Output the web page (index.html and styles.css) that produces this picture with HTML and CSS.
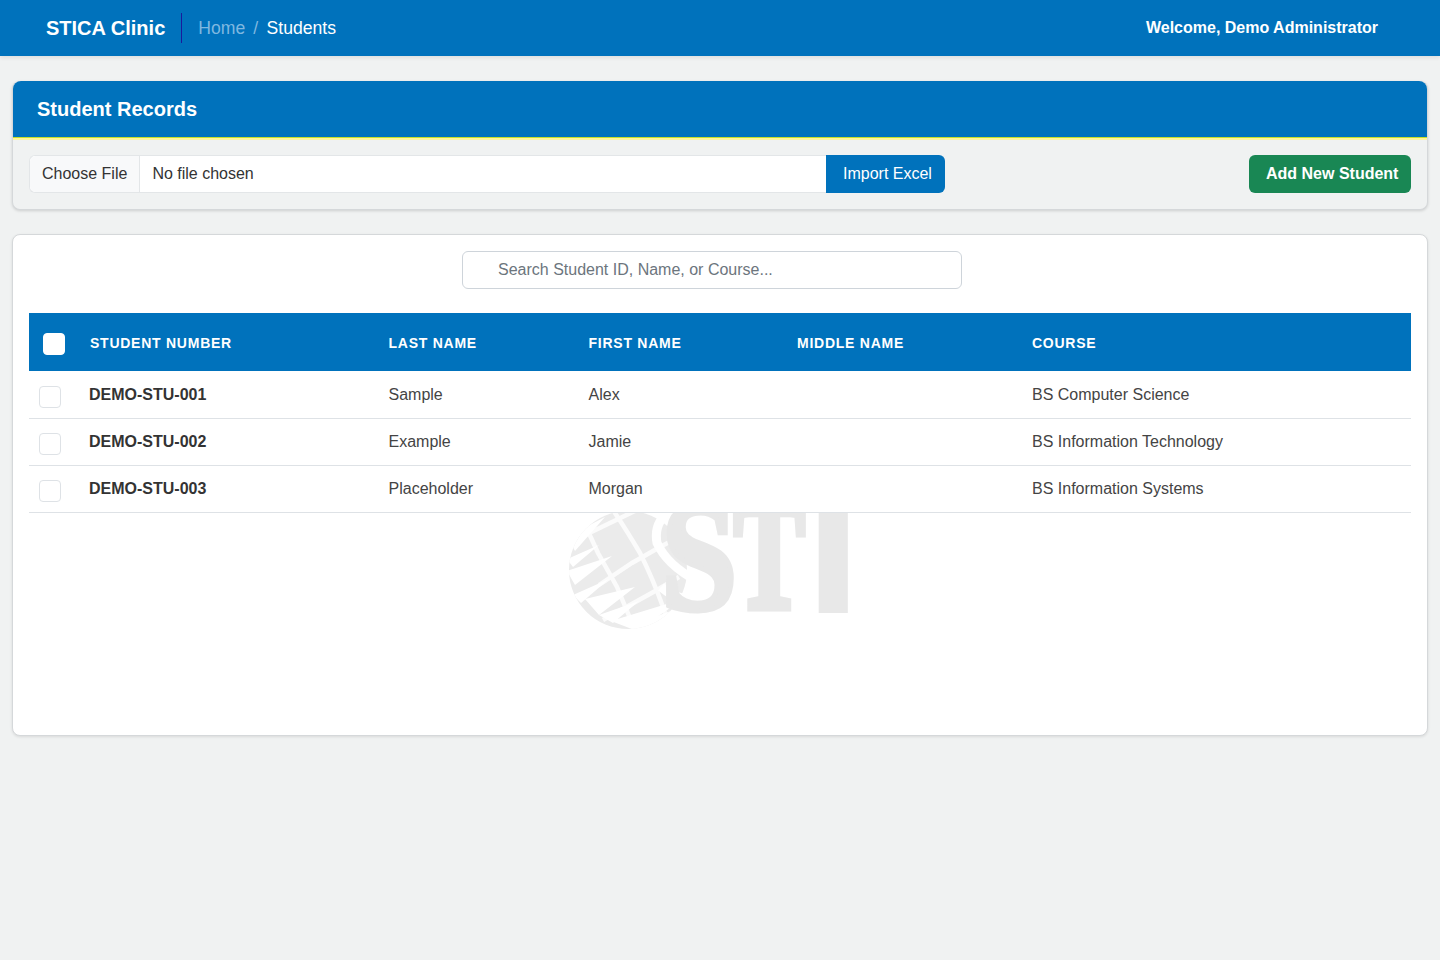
FILE: index.html
```html
<!DOCTYPE html>
<html lang="en">
  <head>
    <meta charset="UTF-8" />
    <meta name="viewport" content="width=device-width, initial-scale=1.0" />
    <title>Student Records</title>
    <link rel="stylesheet" href="styles.css">
  </head>
  <body>
    <nav class="navbar">
      <a class="brand" href="#">STICA Clinic</a>
      <div class="breadcrumb">
        <a href="#">Home</a>
        <span class="sep">/</span>
        <span class="current">Students</span>
      </div>
      <div class="welcome">Welcome, Demo Administrator</div>
    </nav>

    <main class="content">
      <section class="records-card">
        <div class="records-header">
          <h1>Student Records</h1>
        </div>
        <div class="records-tools">
          <form class="import-form">
            <label class="file-field">
              <span class="file-btn">Choose File</span>
              <span class="file-name">No file chosen</span>
            </label>
            <button type="button" class="import-btn">Import Excel</button>
          </form>
          <button type="button" class="add-btn">Add New Student</button>
        </div>
      </section>

      <section class="table-card">
        <!-- Watermark sits behind the table, rows hide the top of it -->
        <svg class="watermark" width="300" height="140" viewBox="0 0 300 140" aria-hidden="true">
          <defs>
            <clipPath id="globeClip">
              <circle cx="59" cy="69" r="59" />
            </clipPath>
          </defs>
          <g clip-path="url(#globeClip)">
            <rect x="0" y="0" width="130" height="130" fill="#ebebeb" />
            <g class="globe-lines">
              <path d="M36 -5 L46 12 Q58 30 71 52 Q84 78 94 106 L102 130" />
              <path d="M18 28 L29 52 L48 86 L63 122 L68 136" />
              <path d="M30 84 L63 62 L91 46 L110 36" />
              <path d="M34 119 L88 89 L110 76" />
              <path d="M12 36 L70 8 L90 2" />
            </g>
            <g fill="#fff">
              <polygon points="-2,36 36,16 6,50" />
              <polygon points="-2,58 30,44 4,66" />
              <polygon points="-2,70 43,55 6,84" />
              <polygon points="4,94 40,78 12,102" />
              <polygon points="16,98 66,86 30,114" />
              <polygon points="30,114 70,100 44,122" />
              <polygon points="42,120 114,98 68,130" />
              <polygon points="64,124 118,104 90,130" />
            </g>
          </g>
          <!-- white edge of the S over the globe -->
          <path class="s-edge" d="M104 8 Q84 20 88 42 Q98 64 128 80 Q142 92 128 98 Q108 100 92 86" />
          <text class="wm-letter wm-s" transform="translate(92 108) scale(0.88 1)">S</text>
          <text class="wm-letter wm-t" transform="translate(165 107) scale(0.68 1)">T</text>
          <text class="wm-letter wm-i" transform="translate(244 108)">I</text>
        </svg>

        <div class="search-row">
          <input class="search-input" type="text" placeholder="Search Student ID, Name, or Course..." />
        </div>

        <table id="studentTable">
          <colgroup>
            <col class="col-check" />
            <col class="col-number" />
            <col class="col-last" />
            <col class="col-first" />
            <col class="col-middle" />
            <col />
          </colgroup>
          <thead>
            <tr>
              <th><span class="check check-head"></span></th>
              <th>Student Number</th>
              <th>Last Name</th>
              <th>First Name</th>
              <th>Middle Name</th>
              <th>Course</th>
            </tr>
          </thead>
          <tbody>
            <tr>
              <td><span class="check"></span></td>
              <td class="student-no">DEMO-STU-001</td>
              <td>Sample</td>
              <td>Alex</td>
              <td></td>
              <td>BS Computer Science</td>
            </tr>
            <tr>
              <td><span class="check"></span></td>
              <td class="student-no">DEMO-STU-002</td>
              <td>Example</td>
              <td>Jamie</td>
              <td></td>
              <td>BS Information Technology</td>
            </tr>
            <tr>
              <td><span class="check"></span></td>
              <td class="student-no">DEMO-STU-003</td>
              <td>Placeholder</td>
              <td>Morgan</td>
              <td></td>
              <td>BS Information Systems</td>
            </tr>
          </tbody>
        </table>
      </section>
    </main>
  </body>
</html>
```

FILE: styles.css
```css
/* General styling */
* {
  box-sizing: border-box;
}

body {
  font-family: "Liberation Sans", Arial, sans-serif;
  font-size: 16px;
  color: #333;
  margin: 0;
  min-height: 960px;
  background-color: #f0f2f2;
}

a {
  text-decoration: none;
}

/* Navbar */
.navbar {
  display: flex;
  align-items: center;
  height: 56px;
  padding: 0 62px 0 46px;
  background-color: #0072bc;
  box-shadow: 0 2px 4px rgba(0, 0, 0, 0.08);
}

.brand {
  color: #fff;
  font-size: 20px;
  font-weight: 700;
  line-height: 30px;
  padding-right: 16px;
  border-right: 1px solid #1a1a9c;
  margin-right: 16px;
}

.breadcrumb {
  display: flex;
  gap: 8px;
  font-size: 17.6px;
}

.breadcrumb a {
  color: #7fb8e0;
}

.breadcrumb .sep {
  color: #7fb8e0;
}

.breadcrumb .current {
  color: #fff;
  margin-left: 0.5px;
}

.welcome {
  margin-left: auto;
  color: #fff;
  font-weight: 700;
}

/* Cards */
.content {
  padding: 25px 12px 0;
}

.records-card {
  background-color: #f0f2f2;
  border-radius: 8px;
  border: 1px solid #d5d8da;
  border-top: 0;
  box-shadow: 0 1px 3px rgba(0, 0, 0, 0.15);
  margin-bottom: 24px;
}

.records-header {
  height: 57px;
  display: flex;
  align-items: center;
  padding: 0 24px;
  background-color: #0072bc;
  border-bottom: 1px solid #c5e02a;
  border-radius: 8px 8px 0 0;
  box-shadow: 0 2px 0 #fff59d;
}

.records-header h1 {
  margin: 0;
  color: #fff;
  font-size: 20px;
  font-weight: 700;
}

.records-tools {
  display: flex;
  justify-content: space-between;
  align-items: center;
  padding: 17px 16px 16px;
}

.import-form {
  display: flex;
  width: 916px;
}

.file-field {
  flex: 1;
  display: flex;
  align-items: center;
  height: 38px;
  background-color: #fff;
  border: 1px solid #e3e6e8;
  border-right: 0;
  border-radius: 6px 0 0 6px;
}

.file-btn {
  display: flex;
  align-items: center;
  height: 100%;
  padding: 0 12px;
  background-color: #f8f9fa;
  border-right: 1px solid #e3e6e8;
  border-radius: 6px 0 0 6px;
}

.file-name {
  padding-left: 12px;
}

button {
  height: 38px;
  border: none;
  color: #fff;
  font-family: inherit;
  font-size: 16px;
  text-align: left;
  padding: 0 0 0 17px;
  cursor: pointer;
}

.import-btn {
  width: 119px;
  background-color: #0072bc;
  border-radius: 0 6px 6px 0;
}

.add-btn {
  width: 162px;
  font-weight: 700;
  background-color: #198754;
  border-radius: 6px;
}

.table-card {
  position: relative;
  min-height: 502px;
  padding: 16px;
  background-color: #fff;
  border: 1px solid #d5d8da;
  border-radius: 8px;
  box-shadow: 0 1px 3px rgba(0, 0, 0, 0.1);
}

/* Watermark */
.watermark {
  position: absolute;
  left: 556px;
  top: 266px;
  filter: blur(0.6px);
}

.globe-lines path {
  fill: none;
  stroke: #fbfbfb;
  stroke-width: 4.5px;
}

.s-edge {
  fill: none;
  stroke: #fff;
  stroke-width: 9px;
}

.wm-letter {
  font-weight: 700;
  fill: #e8e8e8;
  stroke: #e8e8e8;
  stroke-linejoin: miter;
}

.wm-s {
  font-family: "Liberation Serif", serif;
  font-size: 156px;
  stroke-width: 5px;
}

.wm-t {
  font-family: "Liberation Serif", serif;
  font-size: 156px;
  stroke-width: 8px;
}

.wm-i {
  font-family: "Liberation Sans", sans-serif;
  font-size: 146px;
  stroke-width: 8px;
}

.search-row {
  margin: 0 0 24px 433px;
}

.search-input {
  display: block;
  width: 500px;
  height: 38px;
  padding: 0 12px 0 35px;
  font-family: inherit;
  font-size: 16px;
  color: #333;
  background-color: #fff;
  border: 1px solid #ced4da;
  border-radius: 6px;
}

.search-input::placeholder {
  color: #6c757d;
}

/* Table */
table {
  position: relative;
  width: 100%;
  table-layout: fixed;
  border-collapse: collapse;
}

.col-check {
  width: 52px;
}

.col-number {
  width: 299.5px;
}

.col-last {
  width: 200px;
}

.col-first {
  width: 208.5px;
}

.col-middle {
  width: 235px;
}

th,
td {
  padding: 0 8px;
  text-align: left;
}

th {
  height: 58px;
  padding-top: 2px;
  background-color: #0072bc;
  color: #fff;
  font-size: 14px;
  font-weight: 700;
  letter-spacing: 0.75px;
  text-transform: uppercase;
}

th:nth-child(2) {
  padding-left: 9px;
}

td {
  height: 47px;
  color: #444;
  background-color: #fff;
  border-bottom: 1px solid #dee2e6;
}

tbody tr:first-child td {
  padding-top: 2px;
}

td.student-no {
  font-weight: 700;
  color: #333;
}

.check {
  display: block;
  width: 22px;
  height: 22px;
  margin: 3px 0 0 2px;
  background-color: #fff;
  border: 1px solid #dee2e6;
  border-radius: 4px;
}

tbody tr + tr .check {
  margin-top: 5px;
}

.check-head {
  margin: 1px 0 0 6px;
  border-color: #fff;
}
```
